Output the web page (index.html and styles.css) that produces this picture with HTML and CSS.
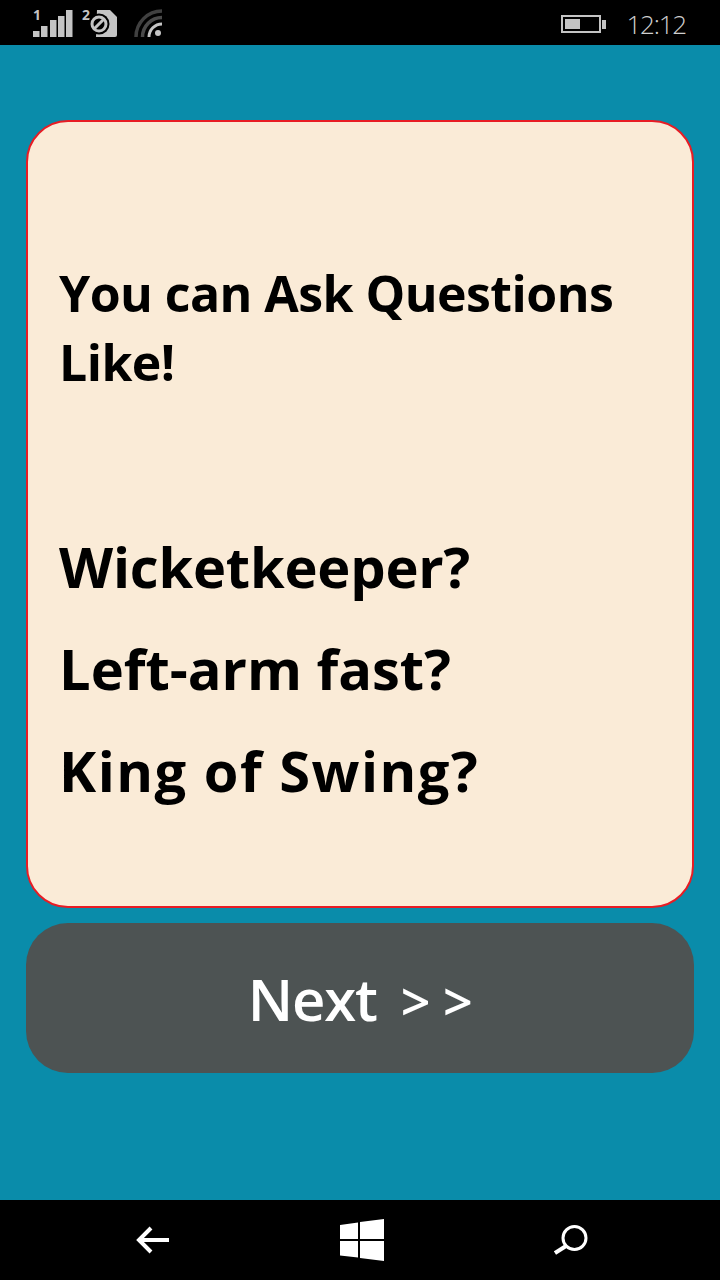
FILE: index.html
```html
<!DOCTYPE html>
<html lang="en">
<head>
<meta charset="utf-8">
<title>Questions</title>
<link rel="stylesheet" href="styles.css">
</head>
<body>
<div class="phone">
  <header class="status">
    <div class="status-left">
      <svg class="sig" width="40" height="28" viewBox="0 0 40 28"><text x="0" y="11" class="sim">1</text><rect x="0" y="22" width="6.500" height="6"/><rect x="8" y="17" width="6.500" height="11"/><rect x="17" y="11" width="6.500" height="17"/><rect x="25" y="7" width="6.500" height="21"/><rect x="33" y="1" width="6.500" height="27"/></svg>
      <svg class="sd" width="36" height="28" viewBox="0 0 36 28"><text x="0" y="11" class="sim">2</text><path d="M15 1h13l7 7v18a2 2 0 0 1-2 2H14z"/><circle cx="17" cy="15" r="10.500" fill="#000"/><circle cx="17" cy="15" r="7" fill="none" stroke="#c4c4c4" stroke-width="3"/><path d="M12 20 22 10" stroke="#c4c4c4" stroke-width="3"/></svg>
      <svg class="wifi" width="28" height="28" viewBox="0 0 28 28"><path d="M2 28A26 26 0 0 1 28 2" fill="none" stroke="#404040" stroke-width="3.500"/><path d="M8.500 28A19.500 19.500 0 0 1 28 8.500" fill="none" stroke="#4a4a4a" stroke-width="3.500"/><path d="M15 28A13 13 0 0 1 28 15" fill="none" stroke="#c4c4c4" stroke-width="3"/><circle cx="24" cy="24" r="3" fill="#c4c4c4"/></svg>
    </div>
    <div class="status-right">
      <div class="battery"><div class="charge"></div></div>
      <div class="nub"></div>
      <span class="clock">12:12</span>
    </div>
  </header>
  <main class="content">
    <section class="card">
      <h1 class="title">You can Ask Questions Like!</h1>
      <ul class="list">
        <li>Wicketkeeper?</li>
        <li class="mid">Left-arm fast?</li>
        <li class="wide">King of Swing?</li>
      </ul>
    </section>
    <button class="next">Next <span class="arrows">&gt; &gt;</span></button>
  </main>
  <footer class="nav">
    <svg width="34" height="30" viewBox="0 0 34 30"><path d="M33 15H4M15 3 3 15l12 12" fill="none" stroke="#fff" stroke-width="4"/></svg>
    <svg width="44" height="42" viewBox="0 0 44 42"><path d="M0 6 18 3.500V20H0zM20 3 44 0V20H20zM0 22H18V38.500L0 36.500zM20 22H44V42L20 39z" fill="#fff"/></svg>
    <svg width="34" height="30" viewBox="0 0 34 30"><circle cx="20.500" cy="13" r="11.500" fill="none" stroke="#fff" stroke-width="3"/><path d="M12 21 1 28" stroke="#fff" stroke-width="4"/></svg>
  </footer>
</div>
</body>
</html>
```
FILE: styles.css
```css
* { box-sizing: border-box; }
html, body { margin: 0; padding: 0; }
body { font-family: "Open Sans", "Noto Sans", sans-serif; background: #000; }
.phone { width: 720px; height: 1280px; display: flex; flex-direction: column; }
.status { height: 45px; background: #000; display: flex; justify-content: space-between; align-items: flex-start; padding: 9px 34px 0 33px; }
.status-left { display: flex; align-items: flex-start; }
.status-left svg { display: block; fill: #c4c4c4; overflow: visible; }
.sd { margin-left: 9px; }
.wifi { margin-left: 16px; }
.sim { font-size: 14px; font-weight: 700; fill: #c4c4c4; font-family: "Open Sans", sans-serif; }
.status-right { display: flex; align-items: center; height: 18px; margin-top: 6px; }
.battery { width: 40px; height: 18px; border: 2px solid #c4c4c4; padding: 2px; }
.charge { width: 15px; height: 100%; background: #c4c4c4; }
.nub { width: 4px; height: 9px; background: #c4c4c4; margin-left: 1px; margin-right: 20px; }
.clock { color: #d0d0d0; font-size: 26px; line-height: 18px; font-weight: 300; letter-spacing: -1.2px; }
.content { height: 1155px; background: #0a8caa; padding: 75px 26px 0; display: flex; flex-direction: column; gap: 15px; }
.card { height: 788px; background: #faebd7; border: 2px solid #e81c24; border-radius: 42px; padding: 137px 31px 0; }
.title { margin: 0; font-size: 50px; line-height: 69px; font-weight: 700; color: #000; letter-spacing: -0.55px; }
.list { list-style: none; margin: 118px 0 0; padding: 0; }
.list li { font-size: 56px; line-height: 102px; font-weight: 700; color: #000; letter-spacing: -0.2px; }
.list .mid { letter-spacing: 0; }
.list .wide { letter-spacing: 1.5px; }
.next { height: 150px; border: 0; border-radius: 42px; background: #4d5353; color: #fff; font-family: inherit; font-size: 58px; font-weight: 600; letter-spacing: -1.2px; padding: 0; }
.arrows { font-size: 52px; letter-spacing: -0.5px; margin-left: 10px; }
.nav { height: 80px; background: #000; display: flex; align-items: center; justify-content: space-between; padding: 0 132px 0 136px; }
.nav svg { display: block; }
```
